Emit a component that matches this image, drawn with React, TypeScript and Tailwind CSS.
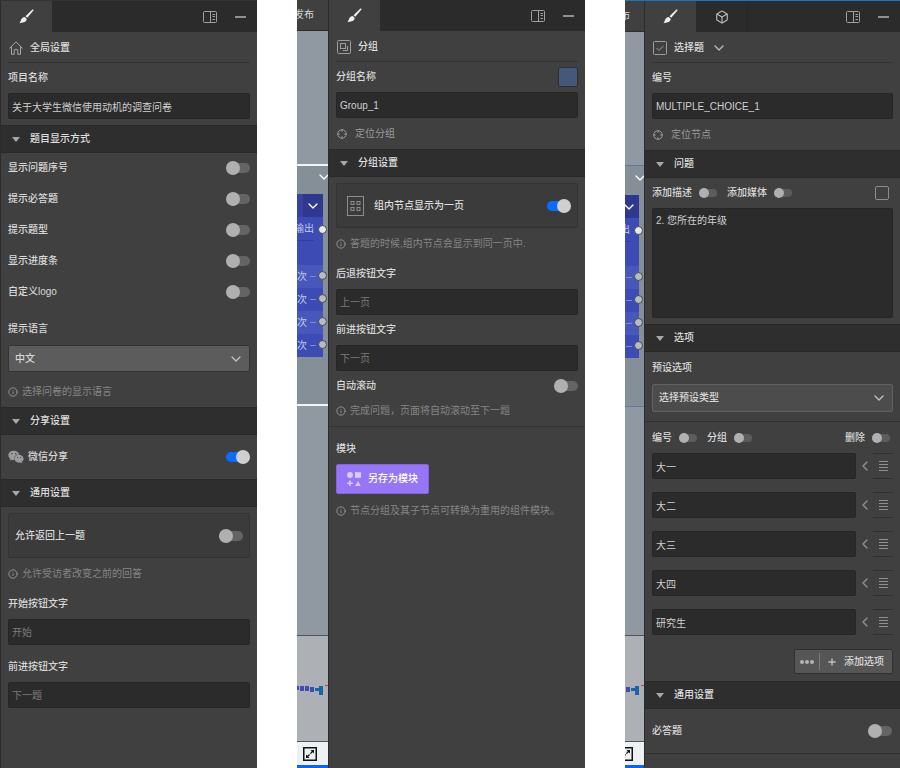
import React, { useId, useState } from "react";
import { FaWeixin } from "react-icons/fa";
import { Box, ChevronDown, ChevronLeft, Info } from "lucide-react";

/* ---------- icons ---------- */

function BrushIcon() {
  return (
    <svg viewBox="0 0 15 15" className="size-[15px] fill-[#f0f0f0]" aria-hidden="true">
      <path d="M14.300.7c.4.4.1.9-.3 1.400L8.300 8.800 6.500 7.200 12.900 1c.5-.5 1.100-.6 1.400-.3Z" />
      <path d="M5.700 8 7.600 9.700c.2 1.700-1 3-2.700 3.500-1.500.4-3 .4-4.400 1 .7-.9 1-1.700 1.400-2.900C2.500 9.400 3.900 8 5.700 8Z" />
    </svg>
  );
}

function DockIcon() {
  return (
    <svg viewBox="0 0 14 12" className="h-3 w-3.5" fill="none" stroke="#a0a0a0" aria-hidden="true">
      <rect x="0.500" y="0.500" width="13" height="11" rx="1" />
      <path d="M7.500 .5v11M9.500 3.500h2.500M9.500 5.500h2.500M9.500 8.500h2.500" />
    </svg>
  );
}

function HomeIcon() {
  return (
    <svg viewBox="0 0 14 14" className="size-3.5" fill="none" stroke="#a8a8a8" strokeLinejoin="round" strokeLinecap="round" aria-hidden="true">
      <path d="M.6 7.300 7 .8l6.400 6.500M2.500 6v7.300h2.700V9c0-.4.2-.6.6-.6h2.400c.4 0 .6.200.6.6v4.300h2.700V6" />
    </svg>
  );
}

function GroupIcon() {
  return (
    <svg viewBox="0 0 14 14" className="size-3.5" fill="none" stroke="#9c9c9c" aria-hidden="true">
      <rect x="0.500" y="0.500" width="13" height="13" rx="1" />
      <rect x="3.500" y="3.500" width="5" height="5" />
      <path d="M10.500 6v4.500H6" />
    </svg>
  );
}

function CheckBoxIcon() {
  return (
    <svg viewBox="0 0 14 14" className="size-3.5" fill="none" stroke="#9c9c9c" aria-hidden="true">
      <rect x="0.500" y="0.500" width="13" height="13" rx="1" />
      <path d="m3.500 7 2.300 2.300L10.500 5" />
    </svg>
  );
}

function TargetIcon() {
  return (
    <svg viewBox="0 0 10 10" className="size-2.5" fill="none" stroke="#9a9a9a" aria-hidden="true">
      <circle cx="5" cy="5" r="4.300" />
      <path d="M5 .5v2.300M5 7.200v2.300M.5 5h2.300M7.200 5h2.300" />
    </svg>
  );
}

function PageGridIcon() {
  return (
    <svg viewBox="0 0 17 20" className="h-5 w-[17px]" fill="none" stroke="#8c8c8c" aria-hidden="true">
      <rect x="0.500" y="0.500" width="16" height="19" />
      <rect x="4" y="5.500" width="3" height="3" />
      <rect x="10" y="5.500" width="3" height="3" />
      <rect x="4" y="11.500" width="3" height="3" />
      <rect x="10" y="11.500" width="3" height="3" />
    </svg>
  );
}

function ShapesIcon() {
  return (
    <svg viewBox="0 0 14 14" className="size-3.5 fill-[#d9ccff]" aria-hidden="true">
      <circle cx="3" cy="3" r="2.900" />
      <rect x="8" y="0.200" width="6" height="5.600" />
      <path d="M2.200 8.500h1.600v2h2v1.600h-2v2H2.200v-2h-2v-1.600h2zM11 9l2.800 5H8.200z" />
    </svg>
  );
}

function ExpandIcon() {
  return (
    <svg viewBox="0 0 14 14" className="size-3.5" fill="none" stroke="#111" aria-hidden="true">
      <rect x="0.750" y="0.750" width="12.500" height="12.500" strokeWidth="1.500" />
      <path d="m4 10 6-6" strokeWidth="1.300" strokeDasharray="3.600 1.200" />
      <path d="M7.500 3H11v3.500zM3 7.500V11h3.500z" fill="#111" stroke="none" />
    </svg>
  );
}

function ListIcon() {
  return (
    <svg viewBox="0 0 9 10" className="h-2.5 w-[9px]" stroke="#909090" aria-hidden="true">
      <path d="M0 .5h9M0 3.500h9M0 6.500h9M0 9.500h9" />
    </svg>
  );
}

/* ---------- controls ---------- */

function Switch({ id, on = false }: { id: string; on?: boolean }) {
  return (
    <input
      id={id}
      type="checkbox"
      role="switch"
      defaultChecked={on}
      className="relative h-2.5 w-6 shrink-0 appearance-none rounded-full bg-[#646464] before:absolute before:-top-0.5 before:left-0 before:size-3.5 before:rounded-full before:bg-[#b0b0b0] checked:bg-[#0a6cff] checked:before:left-2.5 checked:before:bg-[#cfcfcf]"
    />
  );
}

function MiniSwitch({ label }: { label: string }) {
  const id = useId();
  return (
    <div className="flex items-center gap-[7px]">
      <label htmlFor={id} className="font-medium text-[#d8d8d8]">{label}</label>
      <input
        id={id}
        type="checkbox"
        role="switch"
        className="relative h-2 w-[18px] appearance-none rounded-full bg-[#5c5c5c] before:absolute before:-top-px before:left-0 before:size-2.5 before:rounded-full before:bg-[#b0b0b0] checked:bg-[#0a6cff] checked:before:left-2"
      />
    </div>
  );
}

function SwitchRow({ label, className = "h-[31px]", icon, on }: { label: string; className?: string; icon?: React.ReactNode; on?: boolean }) {
  const id = useId();
  return (
    <div className={`flex items-center px-[7px] ${className}`}>
      {icon}
      <label htmlFor={id} className="flex-1 font-medium text-[#d8d8d8]">{label}</label>
      <Switch id={id} on={on} />
    </div>
  );
}

const boxClass =
  "block w-full rounded-xs border border-[#262626] bg-[#2b2b2b] px-[3px] text-[#cfcfcf] outline-none placeholder:text-[#7c7c7c]";

function Field({ label, value, placeholder, labelClass, extra }: { label: string; value?: string; placeholder?: string; labelClass: string; extra?: React.ReactNode }) {
  const id = useId();
  return (
    <div className="px-[7px]">
      <div className={`flex items-center justify-between ${labelClass}`}>
        <label htmlFor={id} className="font-medium text-[#d8d8d8]">{label}</label>
        {extra}
      </div>
      <input id={id} type="text" defaultValue={value} placeholder={placeholder} className={`${boxClass} h-[26px]`} />
    </div>
  );
}

function SelectField({ label, value, labelClass, boxStyle }: { label: string; value: string; labelClass: string; boxStyle: string }) {
  const id = useId();
  return (
    <div className="px-[7px]">
      <label htmlFor={id} className={`flex items-center font-medium text-[#d8d8d8] ${labelClass}`}>{label}</label>
      <div className="relative">
        <select id={id} className={`block w-full appearance-none rounded-xs border px-1.5 font-medium text-[#d8d8d8] outline-none ${boxStyle}`}>
          <option>{value}</option>
        </select>
        <ChevronDown className="pointer-events-none absolute inset-y-0 right-1.5 my-auto size-4 text-[#c0c0c0]" />
      </div>
    </div>
  );
}

function Hint({ children, className }: { children: React.ReactNode; className: string }) {
  return (
    <p className={`flex items-center gap-1 px-[7px] text-[#858585] ${className}`}>
      <Info className="size-2.5 shrink-0 text-[#a0a0a0]" />
      <span className="whitespace-nowrap">{children}</span>
    </p>
  );
}

function Locate({ children }: { children: React.ReactNode }) {
  return (
    <button type="button" className="flex h-[31px] items-center gap-2 px-2 text-[#9a9a9a]">
      <TargetIcon />
      {children}
    </button>
  );
}

function Section({ title, children }: { title: string; children: React.ReactNode }) {
  const [open, setOpen] = useState(true);
  return (
    <section>
      <h2>
        <button
          type="button"
          aria-expanded={open}
          onClick={() => setOpen(!open)}
          className="flex h-7 w-full items-center gap-2.5 border-y border-[#292929] bg-[#2e2e2e] px-[11px] font-medium text-[#dedede]"
        >
          <svg viewBox="0 0 8 5" className="h-[5px] w-2 fill-[#a8a8a8]" aria-hidden="true">
            <path d="M0 0h8L4 5z" />
          </svg>
          {title}
        </button>
      </h2>
      {open && children}
    </section>
  );
}

function Panel({ icon, title, titleExtra, cubeTab, children }: { icon: React.ReactNode; title: string; titleExtra?: React.ReactNode; cubeTab?: boolean; children: React.ReactNode }) {
  return (
    <main className="min-w-0 flex-1 border-l border-[#2c2c2c] bg-[#404040]">
      <header className="flex h-[31px] bg-[#2b2b2b]">
        <button type="button" aria-label="样式" className="flex w-[51px] items-center justify-center bg-[#404040]">
          <BrushIcon />
        </button>
        {cubeTab && (
          <button type="button" aria-label="模块" className="flex w-[52px] items-center justify-center border-r border-[#262626]">
            <Box className="size-3.5 text-[#b8b8b8]" />
          </button>
        )}
        <div className="flex flex-1 items-center justify-end gap-[18px] pr-[11px]">
          <button type="button" aria-label="停靠"><DockIcon /></button>
          <button type="button" aria-label="最小化" className="flex h-3 items-center">
            <span className="h-0.5 w-[11px] bg-[#909090]" />
          </button>
        </div>
      </header>
      <div className="mx-[7px] flex h-[31px] items-center gap-[7px] border-b border-[#333] pt-0.5 pl-px font-medium text-[#dedede]">
        {icon}
        <h1>{title}</h1>
        {titleExtra}
      </div>
      {children}
    </main>
  );
}

/* ---------- slice of the flow canvas beside a panel ---------- */

function CanvasStrip({ selected = false, className }: { selected?: boolean; className: string }) {
  const line = selected ? "border-[#f2f4f6] border-y-2" : "border-[#60789a] border-y";
  return (
    <aside className={`relative flex shrink-0 flex-col overflow-hidden ${className}`}>
      <div className="flex h-[31px] shrink-0 items-center justify-end border-b border-[#2c2c2c] bg-[#404040] pr-3.5 whitespace-nowrap text-[#d8d8d8]">发布</div>
      <div className="relative flex-1 bg-[#9099a1]">
        <div className={`absolute top-[133px] right-0 h-[242px] w-10 bg-[#858f97] ${line}`} />
        <ChevronDown className="absolute top-[138px] -right-1 size-4 text-white" />
        <div className="absolute top-[163px] right-[5px] w-16 rounded-r-xs bg-[#3d4bb5] text-right text-[#c6ccf0]">
          <div className="flex h-[23px] justify-end bg-[#3641a0]">
            <span className="flex w-5 items-center justify-center bg-[#2e388c]">
              <ChevronDown className="size-4 text-white" />
            </span>
          </div>
          <div className="mr-[9px] h-6 border-b border-[#323d9a] leading-6">输出</div>
          <div className="h-6" />
          {[0, 1, 2, 3].map((n) => (
            <div key={n} className="flex h-[23px] items-center justify-end gap-[3px] pr-[7px] odd:bg-[#3d4bb5] even:bg-[#4858ba]">
              次<span className="h-px w-1.5 bg-[#7d89d2]" />
            </div>
          ))}
        </div>
        <div className="absolute top-[194px] right-px size-[9px] rounded-full border border-[#404850] bg-[#e8e8e8]" />
        <div className="absolute top-[240px] right-px flex flex-col gap-3.5">
          {[0, 1, 2, 3].map((n) => (
            <span key={n} className="size-[9px] rounded-full border border-[#404850] bg-[#b8bcc0]" />
          ))}
        </div>
      </div>
      <div className="relative h-[107px] shrink-0 border-y border-[#50555b] bg-[#adb1b6]">
        <svg viewBox="0 0 32 12" className="absolute top-[49px] right-0 h-3 w-8" aria-hidden="true">
          <path d="M0 1h3v4H0zM4 1h4v5H4zM9 1h4v5H9zM14 2h4v5h-4z" fill="#4449b8" />
          <path d="M19 3h4v3h-4zM23 1h4v9h-4z" fill="#1667a8" />
          <path d="M29 0h3v1h-3z" fill="#c5414a" />
        </svg>
      </div>
      <div className="flex h-[26px] shrink-0 items-center justify-end border-b-[3px] border-[#0a63f5] bg-[#eef1f1] pr-[11px]">
        <button type="button" aria-label="全屏" className="shrink-0"><ExpandIcon /></button>
      </div>
    </aside>
  );
}

/* ---------- panels ---------- */

function GlobalPanel() {
  const cardId = useId();
  return (
    <Panel icon={<HomeIcon />} title="全局设置">
      <Field label="项目名称" value="关于大学生微信使用动机的调查问卷" labelClass="h-[30px]" />
      <div className="h-1.5" />
      <Section title="题目显示方式">
        <div className="-mt-px">
          {["显示问题序号", "提示必答题", "提示题型", "显示进度条", "自定义logo"].map((t) => (
            <SwitchRow key={t} label={t} />
          ))}
        </div>
        <div className="h-1.5" />
        <SelectField label="提示语言" value="中文" labelClass="h-8" boxStyle="h-[27px] border-[#333] bg-[#5c5c5c]" />
        <Hint className="h-[35px] pt-1">选择问卷的显示语言</Hint>
      </Section>
      <Section title="分享设置">
        <SwitchRow label="微信分享" on className="h-11" icon={<FaWeixin className="mr-1 size-4 text-[#9c9c9c]" />} />
      </Section>
      <Section title="通用设置">
        <div className="mx-[7px] mt-1.5 flex h-[45px] items-center justify-between rounded-xs border border-[#333] bg-[#3b3b3b] px-1.5">
          <label htmlFor={cardId} className="font-medium text-[#d8d8d8]">允许返回上一题</label>
          <Switch id={cardId} />
        </div>
        <Hint className="h-[31px]">允许受访者改变之前的回答</Hint>
        <Field label="开始按钮文字" placeholder="开始" labelClass="h-[30px]" />
        <div className="h-1.5" />
        <Field label="前进按钮文字" placeholder="下一题" labelClass="h-[31px]" />
      </Section>
    </Panel>
  );
}

function GroupPanel() {
  const cardId = useId();
  const swatch = (
    <button type="button" aria-label="分组颜色" className="size-5 rounded-xs border border-[#2e2e2e] bg-[#43587a]" />
  );
  return (
    <Panel icon={<GroupIcon />} title="分组">
      <Field label="分组名称" value="Group_1" labelClass="h-[30px]" extra={swatch} />
      <Locate>定位分组</Locate>
      <Section title="分组设置">
        <div className="mx-[7px] mt-1.5 flex h-[45px] items-center gap-2.5 rounded-xs border border-[#333] bg-[#3b3b3b] pr-1.5 pl-2.5">
          <PageGridIcon />
          <label htmlFor={cardId} className="flex-1 font-medium text-[#dedede]">组内节点显示为一页</label>
          <Switch id={cardId} on />
        </div>
        <Hint className="h-[31px]">答题的时候,组内节点会显示到同一页中.</Hint>
        <Field label="后退按钮文字" placeholder="上一页" labelClass="h-[30px]" />
        <Field label="前进按钮文字" placeholder="下一页" labelClass="h-[30px]" />
        <SwitchRow label="自动滚动" className="h-[30px]" />
        <Hint className="h-5">完成问题，页面将自动滚动至下一题</Hint>
      </Section>
      <section className="mt-[5px] border-t border-[#333]">
        <h2 className="mt-1.5 flex h-[31px] items-center px-[7px] font-medium text-[#d8d8d8]">模块</h2>
        <button type="button" className="mx-[7px] flex h-[30px] items-center gap-[7px] rounded-xs border border-[#8464dc] bg-[#9676f6] px-2.5 font-medium text-white">
          <ShapesIcon />
          另存为模块
        </button>
        <Hint className="h-[34px]">节点分组及其子节点可转换为重用的组件模块。</Hint>
      </section>
    </Panel>
  );
}

function ChoicePanel() {
  const requiredId = useId();
  return (
    <Panel
      icon={<CheckBoxIcon />}
      title="选择题"
      cubeTab
      titleExtra={<button type="button" aria-label="切换题型"><ChevronDown className="size-4 text-[#b8b8b8]" /></button>}
    >
      <Field label="编号" value="MULTIPLE_CHOICE_1" labelClass="h-[30px]" />
      <Locate>定位节点</Locate>
      <Section title="问题">
        <div className="flex h-[30px] items-center gap-2.5 px-[7px]">
          <MiniSwitch label="添加描述" />
          <MiniSwitch label="添加媒体" />
          <input type="checkbox" aria-label="富文本" className="mr-1 ml-auto size-3.5 appearance-none rounded-xs border border-[#8c8c8c]" />
        </div>
        <div className="px-[7px] pb-1.5">
          <textarea aria-label="问题" defaultValue="2. 您所在的年级" className={`${boxClass} h-[110px] resize-none py-1`} />
        </div>
      </Section>
      <Section title="选项">
        <SelectField label="预设选项" value="选择预设类型" labelClass="h-8" boxStyle="h-7 border-[#626262] bg-[#4c4c4c]" />
        <div className="mt-[9px] border-t border-[#303030] px-[7px]">
          <div className="flex h-[31px] items-center gap-2.5">
            <MiniSwitch label="编号" />
            <MiniSwitch label="分组" />
            <div className="mr-[3px] ml-auto"><MiniSwitch label="删除" /></div>
          </div>
          <ul className="flex flex-col gap-[13px]">
            {["大一", "大二", "大三", "大四", "研究生"].map((t) => (
              <li key={t} className="flex items-center">
                <input type="text" aria-label="选项" defaultValue={t} className={`${boxClass} h-[26px] min-w-0 flex-1`} />
                <button type="button" aria-label="展开选项" className="flex w-[17px] justify-center">
                  <ChevronLeft className="size-4 text-[#909090]" />
                </button>
                <button type="button" aria-label="拖动排序" className="flex h-[26px] w-5 items-center justify-center border-y border-[#303030]">
                  <ListIcon />
                </button>
              </li>
            ))}
          </ul>
          <div className="mt-3.5 mb-[7px] ml-auto flex h-[25px] w-fit items-center rounded-xs border border-[#303030] bg-[#565656]">
            <button type="button" aria-label="更多" className="flex h-[17px] w-[25px] items-center justify-center gap-px border-r border-[#7c7c7c]">
              <span className="size-1 rounded-full bg-[#b4b4b4]" />
              <span className="size-1 rounded-full bg-[#b4b4b4]" />
              <span className="size-1 rounded-full bg-[#b4b4b4]" />
            </button>
            <button type="button" className="flex items-center gap-2 px-2 font-medium text-[#d8d8d8]">
              <svg viewBox="0 0 8 8" className="size-2" stroke="#c4c4c4" strokeWidth="1.300" aria-hidden="true">
                <path d="M4 .5v7M.5 4h7" />
              </svg>
              添加选项
            </button>
          </div>
        </div>
      </Section>
      <Section title="通用设置">
        <div className="flex h-[45px] items-center justify-between border-b border-[#303030] pr-2 pl-[7px]">
          <label htmlFor={requiredId} className="font-medium text-[#d8d8d8]">必答题</label>
          <Switch id={requiredId} />
        </div>
      </Section>
    </Panel>
  );
}

export default function App() {
  return (
    <div
      lang="zh-CN"
      className="grid min-h-screen grid-cols-[257fr_288fr_275fr] gap-10 bg-white font-['Liberation_Sans','Noto_Sans_CJK_SC',sans-serif] text-[10px] leading-4"
    >
      <div className="flex min-w-0 border-t border-[#333]">
        <GlobalPanel />
      </div>
      <div className="flex min-w-0">
        <CanvasStrip selected className="w-[31px]" />
        <GroupPanel />
      </div>
      <div className="flex min-w-0 border-t border-[#1478be]">
        <CanvasStrip className="w-[19px]" />
        <ChoicePanel />
      </div>
    </div>
  );
}
